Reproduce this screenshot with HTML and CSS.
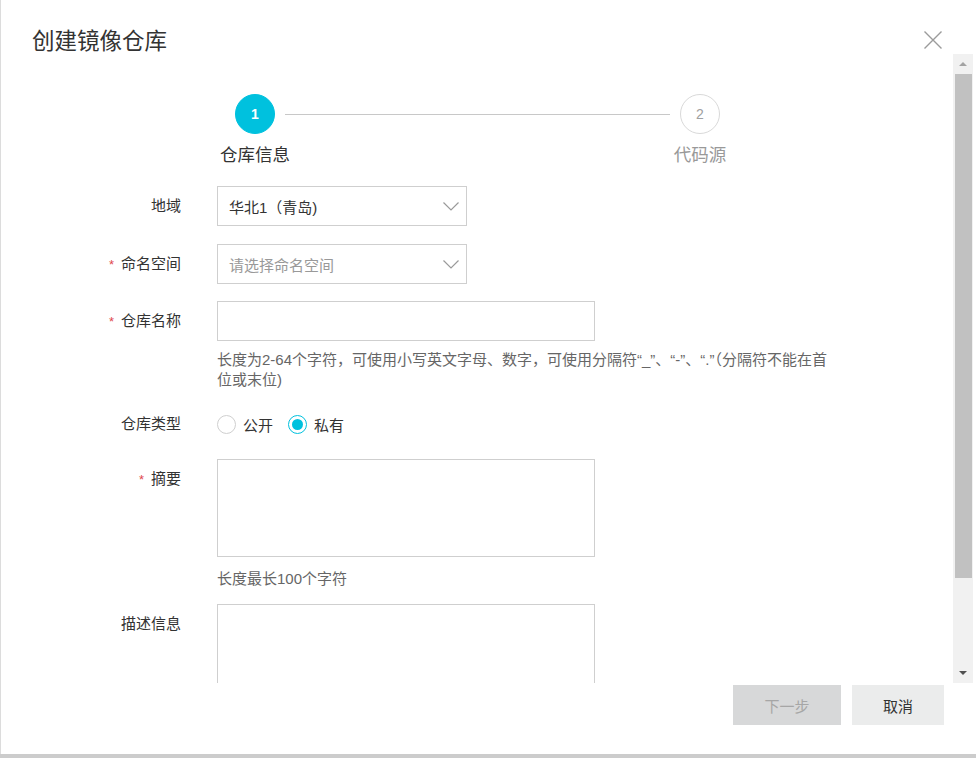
FILE: index.html
```html
<!DOCTYPE html>
<html lang="zh-CN">
<head>
<meta charset="utf-8">
<title>创建镜像仓库</title>
<link rel="stylesheet" href="styles.css">
</head>
<body>
<div class="dialog">
  <header class="dlg-head">
    <h1 class="dlg-title">创建镜像仓库</h1>
    <button class="close" type="button" aria-label="关闭">
      <svg width="18" height="18" viewBox="0 0 18 18"><path d="M0.5 0.5L17.5 17.5M17.5 0.5L0.5 17.5" stroke="#9b9b9b" stroke-width="1.4" fill="none"/></svg>
    </button>
  </header>
  <div class="dlg-main">
    <div class="dlg-body">
      <div class="steps">
        <div class="steps-track">
          <span class="step-dot active">1</span>
          <span class="step-line"></span>
          <span class="step-dot">2</span>
        </div>
        <div class="steps-labels">
          <span class="step-label active">仓库信息</span>
          <span class="step-label">代码源</span>
        </div>
      </div>
      <form class="form">
        <div class="row r1">
          <label class="label">地域</label>
          <div class="control">
            <div class="select">
              <span class="select-text">华北1（青岛)</span>
              <svg class="chev" width="16" height="9" viewBox="0 0 16 9"><polyline points="0.5,0.5 8,8 15.5,0.5" fill="none" stroke="#9a9a9a" stroke-width="1.2"/></svg>
            </div>
          </div>
        </div>
        <div class="row r2">
          <label class="label"><span class="req">*</span>命名空间</label>
          <div class="control">
            <div class="select">
              <span class="select-text placeholder">请选择命名空间</span>
              <svg class="chev" width="16" height="9" viewBox="0 0 16 9"><polyline points="0.5,0.5 8,8 15.5,0.5" fill="none" stroke="#9a9a9a" stroke-width="1.2"/></svg>
            </div>
          </div>
        </div>
        <div class="row r3">
          <label class="label"><span class="req">*</span>仓库名称</label>
          <div class="control">
            <input class="input" type="text">
            <p class="help help-name">长度为2-64个字符，可使用小写英文字母、数字，可使用分隔符“_”、“-”、“.”（分隔符不能在首<br>位或末位)</p>
          </div>
        </div>
        <div class="row r4">
          <label class="label label-short">仓库类型</label>
          <div class="control radios">
            <span class="radio"><span class="radio-circle"></span><span class="radio-text">公开</span></span>
            <span class="radio checked"><span class="radio-circle"></span><span class="radio-text">私有</span></span>
          </div>
        </div>
        <div class="row r5">
          <label class="label"><span class="req">*</span>摘要</label>
          <div class="control">
            <textarea class="textarea"></textarea>
            <p class="help help-sum">长度最长100个字符</p>
          </div>
        </div>
        <div class="row r6">
          <label class="label">描述信息</label>
          <div class="control">
            <textarea class="textarea"></textarea>
          </div>
        </div>
      </form>
    </div>
    <div class="scrollbar">
      <div class="sb-btn"><span class="tri-up"></span></div>
      <div class="sb-thumb"></div>
      <div class="sb-space"></div>
      <div class="sb-btn"><span class="tri-down"></span></div>
    </div>
  </div>
  <footer class="dlg-foot">
    <button class="btn btn-next" type="button">下一步</button>
    <button class="btn btn-cancel" type="button">取消</button>
  </footer>
</div>
<div class="page-bottom"></div>
</body>
</html>
```
FILE: styles.css
```css
* { box-sizing: border-box; }
html, body { margin: 0; padding: 0; background: #fff; }
body {
  font-family: "Liberation Sans", "Noto Sans CJK SC", sans-serif;
  font-size: 15px;
  color: #333;
  width: 976px;
  height: 758px;
  overflow: hidden;
}
.dialog {
  height: 754px;
  display: flex;
  flex-direction: column;
  border-left: 1px solid #dcdcdc;
  background: #fff;
}
.dlg-head {
  height: 54px;
  display: flex;
  align-items: flex-start;
  justify-content: space-between;
  padding: 0 34px 0 31px;
}
.dlg-title {
  margin: 27px 0 0;
  font-size: 22.5px;
  line-height: 30px;
  font-weight: normal;
  color: #333;
}
.close {
  margin-top: 31px;
  padding: 0;
  border: 0;
  background: none;
  width: 18px;
  height: 18px;
  display: block;
}
.close svg { display: block; }
.dlg-main {
  height: 629px;
  display: flex;
}
.dlg-body {
  flex: 1;
  overflow: hidden;
}
.scrollbar {
  width: 20px;
  margin-right: 3px;
  background: #f1f1f1;
  display: flex;
  flex-direction: column;
  align-items: center;
}
.sb-btn {
  height: 20px;
  width: 100%;
  display: flex;
  align-items: center;
  justify-content: center;
}
.tri-up {
  width: 0; height: 0;
  border-left: 4px solid transparent;
  border-right: 4px solid transparent;
  border-bottom: 4px solid #a3a3a3;
}
.tri-down {
  width: 0; height: 0;
  border-left: 4px solid transparent;
  border-right: 4px solid transparent;
  border-top: 4px solid #505050;
}
.sb-thumb {
  width: 17px;
  height: 504px;
  background: #c1c1c1;
}
.sb-space { flex: 1; }

/* steps */
.steps { padding-top: 40px; }
.steps-track {
  display: flex;
  align-items: center;
  padding-left: 234px;
}
.step-dot {
  width: 40px;
  height: 40px;
  border-radius: 50%;
  border: 1px solid #d9d9d9;
  color: #a0a0a0;
  font-size: 14px;
  display: flex;
  align-items: center;
  justify-content: center;
  background: #fff;
}
.step-dot.active {
  background: #00c1de;
  border-color: #00c1de;
  color: #fff;
  font-weight: bold;
}
.step-line {
  width: 385px;
  height: 1px;
  margin: 0 10px;
  background: #c8c8c8;
}
.steps-labels {
  display: flex;
  padding-left: 204px;
  margin-top: 9px;
  gap: 345px;
}
.step-label {
  width: 100px;
  text-align: center;
  font-size: 17.5px;
  line-height: 24px;
  color: #999;
}
.step-label.active { color: #333; }

/* form */
.form { margin-top: 19px; }
.row { display: flex; align-items: flex-start; }
.r1 { margin-bottom: 18px; }
.r2 { margin-bottom: 17px; }
.r3 { margin-bottom: 18px; }
.r4 { margin-bottom: 19px; }
.r5 { margin-bottom: 15px; }
.label {
  width: 216px;
  height: 40px;
  flex: none;
  padding-right: 36px;
  text-align: right;
  line-height: 40px;
  font-size: 15px;
  color: #333;
  white-space: nowrap;
}
.label-short { line-height: 32px; height: 32px; }
.req {
  color: #e0484e;
  margin-right: 7px;
  font-size: 13px;
  line-height: 1;
}
.control { flex: 1; }
.select {
  width: 250px;
  height: 40px;
  border: 1px solid #cfcfcf;
  display: flex;
  align-items: center;
  justify-content: space-between;
  padding: 0 7px 0 11px;
}
.select-text { color: #333; font-size: 15px; }
.select-text.placeholder { color: #999; }
.chev { display: block; }
.input {
  display: block;
  width: 378px;
  height: 40px;
  border: 1px solid #cfcfcf;
  margin: 0;
  padding: 0 10px;
  font: inherit;
  outline: none;
}
.help {
  margin: 0;
  font-size: 15px;
  line-height: 20px;
  color: #666;
  white-space: nowrap;
}
.help-name { margin-top: 9px; }
.help-sum { margin-top: 12px; }
.radios {
  display: flex;
  align-items: center;
  height: 32px;
}
.radio {
  display: flex;
  align-items: center;
  margin-right: 15px;
}
.radio-circle {
  width: 19px;
  height: 19px;
  border-radius: 50%;
  border: 1px solid #cfcfcf;
  margin-right: 7px;
  display: flex;
  align-items: center;
  justify-content: center;
}
.radio.checked .radio-circle { border-color: #00c1de; }
.radio.checked .radio-circle::after {
  content: "";
  width: 11px;
  height: 11px;
  border-radius: 50%;
  background: #00c1de;
}
.radio-text { font-size: 15px; color: #333; }
.textarea {
  display: block;
  width: 378px;
  height: 98px;
  border: 1px solid #cfcfcf;
  margin: 0;
  padding: 6px 10px;
  resize: none;
  font: inherit;
  outline: none;
}

/* footer */
.dlg-foot {
  flex: 1;
  display: flex;
  justify-content: flex-end;
  align-items: flex-start;
  padding: 2px 32px 0 0;
  gap: 11px;
}
.btn {
  height: 40px;
  border: 0;
  margin: 0;
  font-family: inherit;
  font-size: 15px;
}
.btn-next {
  width: 108px;
  background: #d7d8d9;
  color: #a6a6a6;
}
.btn-cancel {
  width: 92px;
  background: #ebecec;
  color: #333;
}
.page-bottom {
  height: 4px;
  background: #cccccc;
}
```
